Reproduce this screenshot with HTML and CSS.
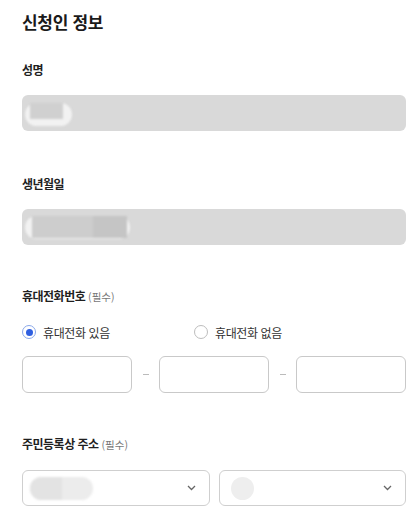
FILE: index.html
```html
<!DOCTYPE html>
<html lang="ko">
<head>
<meta charset="utf-8">
<link rel="stylesheet" href="styles.css">
</head>
<body>
<div class="page">
  <h1 class="title">신청인 정보</h1>

  <div class="field field-name">
    <div class="label">성명</div>
    <div class="input-disabled">
      <div class="blur-pill name-pill"><span class="blur-block name-block"></span></div>
    </div>
  </div>

  <div class="field field-birth">
    <div class="label">생년월일</div>
    <div class="input-disabled">
      <div class="blur-pill birth-pill"><span class="blur-block birth-block"></span><span class="blur-block birth-block2"></span></div>
    </div>
  </div>

  <div class="field field-phone">
    <div class="label">휴대전화번호 <span class="req">(필수)</span></div>
    <div class="radios">
      <label class="radio checked"><span class="circle"></span>휴대전화 있음</label>
      <label class="radio"><span class="circle"></span>휴대전화 없음</label>
    </div>
    <div class="phone-row">
      <div class="box"></div>
      <span class="dash"></span>
      <div class="box"></div>
      <span class="dash"></span>
      <div class="box"></div>
    </div>
  </div>

  <div class="field field-addr">
    <div class="label">주민등록상 주소 <span class="req">(필수)</span></div>
    <div class="select-row">
      <div class="select">
        <div class="sel-pill"><span class="sel-pill-left"></span></div>
        <svg class="chev" width="9" height="6" viewBox="0 0 9 6"><path d="M1 1l3.5 3.5L8 1" fill="none" stroke="#666" stroke-width="1.3"/></svg>
      </div>
      <div class="select">
        <div class="sel-circle"></div>
        <svg class="chev" width="9" height="6" viewBox="0 0 9 6"><path d="M1 1l3.5 3.5L8 1" fill="none" stroke="#666" stroke-width="1.3"/></svg>
      </div>
    </div>
  </div>
</div>
</body>
</html>
```

FILE: styles.css
```css
* { box-sizing: border-box; }
html, body { margin: 0; padding: 0; background: #fff; }
body {
  font-family: "Noto Sans CJK KR", "Noto Sans", sans-serif;
  color: #222;
}
.page {
  width: 418px;
  padding: 10px 12px 0 22px;
}
.title {
  margin: 0;
  font-size: 17px;
  line-height: 24px;
  font-weight: 700;
  color: #1a1a1a;
  letter-spacing: -0.3px;
}
.label {
  font-size: 12px;
  line-height: 18px;
  font-weight: 700;
  color: #1f1f1f;
  letter-spacing: -0.5px;
}
.req {
  font-size: 10.5px;
  font-weight: 400;
  color: #777;
  letter-spacing: 0;
}
.field-name { margin-top: 27px; }
.field-birth { margin-top: 44px; }
.field-phone { margin-top: 42px; }
.field-addr { margin-top: 42px; }

.input-disabled {
  margin-top: 16px;
  height: 36px;
  background: #d9d9d9;
  border-radius: 6px;
  display: flex;
  align-items: center;
  padding-left: 3px;
}
.blur-pill {
  background: #f2f2f2;
  border-radius: 12px;
  height: 23px;
  position: relative;
  filter: blur(1px);
  display: flex;
}
.name-pill { width: 47px; margin-top: 2px; }
.name-block {
  display: block;
  margin-left: 5px;
  width: 33px;
  height: 16px;
  background: #d0d0d0;
}
.birth-pill { width: 105px; align-items: center; padding-left: 7px; }
.blur-block { display: block; }
.birth-block { width: 61px; height: 22px; background: #cdcdcd; }
.birth-block2 { width: 34px; height: 22px; background: #c5c5c5; }

.radios {
  margin-top: 14px;
  height: 24px;
  display: flex;
  align-items: center;
}
.radio {
  display: flex;
  align-items: center;
  font-size: 12px;
  letter-spacing: -0.4px;
  color: #333;
  width: 172px;
}
.circle {
  width: 14px;
  height: 14px;
  border-radius: 50%;
  border: 1px solid #bdbdbd;
  margin-right: 7px;
  display: flex;
  align-items: center;
  justify-content: center;
}
.radio.checked .circle { border-color: #8aa8ea; }
.radio.checked .circle::after {
  content: "";
  width: 7px;
  height: 7px;
  border-radius: 50%;
  background: #2f5fe0;
}

.phone-row {
  margin-top: 12px;
  display: flex;
  align-items: center;
}
.box {
  width: 110px;
  height: 37px;
  border: 1px solid #c9c9c9;
  border-radius: 6px;
}
.dash {
  width: 6px;
  height: 1px;
  background: #bbb;
  margin: 0 10px 0 11px;
}

.select-row {
  margin-top: 16px;
  display: flex;
  gap: 9px;
}
.select {
  flex: 1;
  height: 36px;
  border: 1px solid #cfcfcf;
  border-radius: 6px;
  display: flex;
  align-items: center;
  padding: 0 13px 0 7px;
}
.sel-pill {
  width: 63px;
  height: 23px;
  border-radius: 12px;
  background: #ececec;
  overflow: hidden;
  filter: blur(0.8px);
}
.sel-pill-left {
  display: block;
  width: 32px;
  height: 23px;
  background: #e3e3e3;
}
.sel-circle {
  width: 23px;
  height: 23px;
  border-radius: 50%;
  background: #eeeeee;
  margin-left: 4px;
  filter: blur(0.6px);
}
.chev { margin-left: auto; }
```
